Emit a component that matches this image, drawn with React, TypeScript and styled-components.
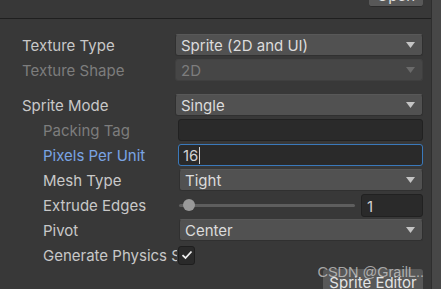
import React from 'react'
import styled, { createGlobalStyle } from 'styled-components'

const GlobalStyle = createGlobalStyle`
  html, body {
    margin: 0;
    padding: 0;
    background: #383838;
  }
  * {
    box-sizing: border-box;
  }
`

type FieldProps = { $nested?: boolean }

const Inspector = () => {
  return (
    <>
      <GlobalStyle />
      <Wrapper>
        <Main>
          <TopBar>
            <SmallButton>Open</SmallButton>
          </TopBar>
          <Section>
            <Row>
              <Label>Texture Type</Label>
              <Dropdown value='Sprite (2D and UI)' />
            </Row>
            <Row>
              <Label $disabled>Texture Shape</Label>
              <Dropdown value='2D' disabled />
            </Row>
            <Spacer />
            <Row>
              <Label>Sprite Mode</Label>
              <Dropdown value='Single' />
            </Row>
            <Row>
              <Label $nested $disabled>Packing Tag</Label>
              <TextField $nested />
            </Row>
            <Row>
              <Label $nested $focused>Pixels Per Unit</Label>
              <TextField $nested $focused>
                16<Caret />
              </TextField>
            </Row>
            <Row>
              <Label $nested>Mesh Type</Label>
              <Dropdown value='Tight' nested />
            </Row>
            <Row>
              <Label $nested>Extrude Edges</Label>
              <SliderBox>
                <Track>
                  <Knob />
                </Track>
                <NumberField>1</NumberField>
              </SliderBox>
            </Row>
            <Row>
              <Label $nested>Pivot</Label>
              <Dropdown value='Center' nested />
            </Row>
            <Row>
              <Label $nested>Generate Physics Shape</Label>
              <Checkbox>
                <svg width='12' height='10' viewBox='0 0 12 10'>
                  <path d='M1.5 5.2 L4.5 8 L10.5 1.5' fill='none' stroke='#eeeeee' strokeWidth='1.8' />
                </svg>
              </Checkbox>
            </Row>
            <ButtonRow>
              <BigButton>Sprite Editor</BigButton>
              <Watermark>CSDN @GrailL..</Watermark>
            </ButtonRow>
          </Section>
        </Main>
        <Scrollbar />
      </Wrapper>
    </>
  )
}

const Dropdown: React.FC<{ value: string; disabled?: boolean; nested?: boolean }> = ({
  value,
  disabled,
  nested,
}) => {
  return (
    <Select $disabled={disabled} $nested={nested}>
      <span>{value}</span>
      <svg width='9' height='6' viewBox='0 0 9 6'>
        <path d='M0 0 H9 L4.5 6 Z' fill={disabled ? '#6a6a6a' : '#c4c4c4'} />
      </svg>
    </Select>
  )
}

const Wrapper = styled.div`
  width: 441px;
  height: 289px;
  display: flex;
  overflow: hidden;
  font-family: Inter, 'Noto Sans', sans-serif;
  font-size: 15px;
`

const Main = styled.div`
  flex: 1;
  display: flex;
  flex-direction: column;
  padding-right: 8px;
`

const Scrollbar = styled.div`
  width: 10px;
  background: #474747;
  border-left: 1px solid #2e2e2e;
`

const TopBar = styled.div`
  flex: none;
  height: 19px;
  display: flex;
  justify-content: flex-end;
  align-items: flex-end;
  border-bottom: 1px solid #1f1f1f;
  margin-right: -8px;
  padding-right: 8px;
  padding-bottom: 11px;
  overflow: hidden;
`

const SmallButton = styled.div`
  flex: none;
  width: 54px;
  height: 20px;
  background: #585858;
  border-radius: 3px;
  border-bottom: 1px solid #2a2a2a;
  color: #e0e0e0;
  font-size: 15px;
  text-align: center;
  line-height: 18px;
`

const Section = styled.div`
  flex: none;
  display: flex;
  flex-direction: column;
  gap: 3px;
  padding-top: 15px;
  padding-left: 22px;
`

const Spacer = styled.div`
  flex: none;
  height: 7px;
`

const Row = styled.div`
  flex: none;
  height: 22px;
  display: flex;
  align-items: center;
`

const Label = styled.div<{ $nested?: boolean; $disabled?: boolean; $focused?: boolean }>`
  width: ${p => (p.$nested ? 134 : 153)}px;
  padding-left: ${p => (p.$nested ? 21 : 0)}px;
  flex: none;
  box-sizing: content-box;
  white-space: nowrap;
  overflow: hidden;
  color: ${p => (p.$focused ? '#7aa4e4' : p.$disabled ? '#7d7d7d' : '#c8c8c8')};
`

const Select = styled.div<{ $disabled?: boolean; $nested?: boolean }>`
  flex: 1;
  height: 22px;
  margin-left: ${p => (p.$nested ? 2 : 0)}px;
  display: flex;
  align-items: center;
  justify-content: space-between;
  padding: 0 7px 0 5px;
  border-radius: 3px;
  background: ${p => (p.$disabled ? '#464646' : '#515151')};
  border: 1px solid ${p => (p.$disabled ? '#3f3f3f' : '#303030')};
  border-top-color: ${p => (p.$disabled ? '#434343' : '#585858')};
  color: ${p => (p.$disabled ? '#7d7d7d' : '#dcdcdc')};
`

const TextField = styled.div<FieldProps & { $focused?: boolean }>`
  flex: 1;
  height: 22px;
  margin-left: ${p => (p.$nested ? 1 : 0)}px;
  display: flex;
  align-items: center;
  padding: 0 4px;
  border-radius: 3px;
  background: #2a2a2a;
  border: 1px solid ${p => (p.$focused ? '#3a79bb' : '#212121')};
  color: #d2d2d2;
`

const Caret = styled.span`
  display: inline-block;
  width: 1px;
  height: 17px;
  background: #d2d2d2;
  margin-left: 1px;
`

const SliderBox = styled.div`
  flex: 1;
  display: flex;
  align-items: center;
  margin-left: 2px;
  gap: 6px;
`

const Track = styled.div`
  flex: 1;
  height: 3px;
  background: #5e5e5e;
  border-radius: 2px;
  display: flex;
  align-items: center;
  padding-left: 4px;
`

const Knob = styled.div`
  flex: none;
  width: 12px;
  height: 12px;
  border-radius: 50%;
  background: #999999;
`

const NumberField = styled.div`
  flex: none;
  width: 62px;
  height: 23px;
  display: flex;
  align-items: center;
  padding: 2px 5px 0;
  border-radius: 3px;
  background: #2a2a2a;
  border: 1px solid #212121;
  color: #d2d2d2;
`

const Checkbox = styled.div`
  flex: none;
  width: 17px;
  height: 19px;
  margin-left: 1px;
  display: flex;
  align-items: center;
  justify-content: center;
  border-radius: 3px;
  background: #2a2a2a;
  border: 1px solid #1e1e1e;
`

const ButtonRow = styled.div`
  flex: none;
  position: relative;
  display: flex;
  justify-content: flex-end;
  height: 22px;
`

const BigButton = styled.div`
  flex: none;
  width: 100px;
  height: 24px;
  background: #585858;
  border-radius: 3px;
  color: #e4e4e4;
  text-align: center;
  line-height: 27px;
  font-size: 15px;
`

const Watermark = styled.div`
  position: absolute;
  right: -1px;
  top: -5px;
  color: rgba(205, 205, 205, 0.75);
  font-size: 14.5px;
  font-family: 'Liberation Sans', Arial, sans-serif;
  white-space: nowrap;
`

export default Inspector
